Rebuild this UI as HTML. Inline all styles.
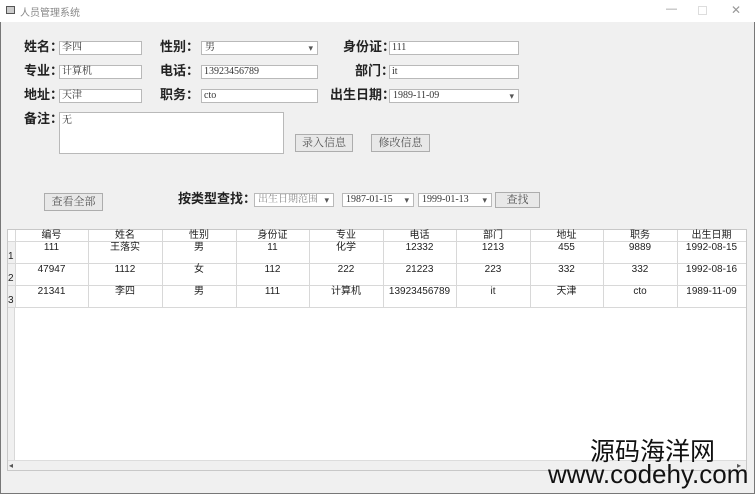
<!DOCTYPE html>
<html><head><meta charset="utf-8">
<style>
*{margin:0;padding:0;box-sizing:border-box}
body{width:755px;height:494px;overflow:hidden;background:#f0f0f0;position:relative;font-family:"Liberation Sans","Noto Sans CJK SC",sans-serif;color:#000}
.a{position:absolute}
.title{left:0;top:0;width:755px;height:22px;background:#fff;font-size:10px;color:#888}
.lbl{font-size:13px;font-weight:bold;line-height:14px;color:#222;white-space:nowrap}
.in{background:#fff;border:1px solid #b9b9b9;height:14px;font-size:10px;line-height:12px;padding-left:2px;color:#333;font-family:"Liberation Serif","Noto Serif CJK SC",serif}
.cb{background:#fff;border:1px solid #b9b9b9;height:14px;font-size:10px;line-height:12px;padding-left:3px;color:#333;font-family:"Liberation Serif","Noto Serif CJK SC",serif;white-space:nowrap;overflow:hidden}
.cb:after{content:"▾";position:absolute;right:4px;top:0;font-size:9px;color:#555}
.btn{background:#e8e8e8;border:1px solid #adadad;font-size:11px;color:#555;text-align:center;font-family:"Liberation Serif","Noto Serif CJK SC",serif}
.row{position:absolute;left:8px;height:22px;width:738px;border-bottom:1px solid #d8d8d8;font-size:10px;line-height:11px;color:#222}
.row span{position:absolute;top:0;text-align:center;height:100%;border-right:1px solid #d8d8d8}
</style></head><body>
<div class="a" style="left:0;top:0;width:755px;height:494px;border:1px solid #777;border-top:none"></div>
<div class="a title"><div class="a" style="left:6px;top:6px;width:9px;height:8px;border:1px solid #555;background:#ccc"></div><div class="a" style="left:20px;top:4px">人员管理系统</div>
<div class="a" style="left:666px;top:3px;font-size:11px;color:#999">—</div>
<div class="a" style="left:698px;top:6px;width:9px;height:9px;border:1px solid #ddd"></div>
<div class="a" style="left:731px;top:3px;font-size:12px;color:#999">✕</div></div>

<div class="a lbl" style="left:24px;top:40px">姓名：</div>
<div class="a in" style="left:59px;top:41px;width:83px">李四</div>
<div class="a lbl" style="left:160px;top:40px">性别：</div>
<div class="a cb" style="left:201px;top:41px;width:117px">男</div>
<div class="a lbl" style="left:343px;top:40px">身份证：</div>
<div class="a in" style="left:389px;top:41px;width:130px">111</div>

<div class="a lbl" style="left:24px;top:64px">专业：</div>
<div class="a in" style="left:59px;top:65px;width:83px">计算机</div>
<div class="a lbl" style="left:160px;top:64px">电话：</div>
<div class="a in" style="left:201px;top:65px;width:117px">13923456789</div>
<div class="a lbl" style="left:355px;top:64px">部门：</div>
<div class="a in" style="left:389px;top:65px;width:130px">it</div>

<div class="a lbl" style="left:24px;top:88px">地址：</div>
<div class="a in" style="left:59px;top:89px;width:83px">天津</div>
<div class="a lbl" style="left:160px;top:88px">职务：</div>
<div class="a in" style="left:201px;top:89px;width:117px">cto</div>
<div class="a lbl" style="left:330px;top:88px">出生日期：</div>
<div class="a cb" style="left:389px;top:89px;width:130px">1989-11-09</div>

<div class="a lbl" style="left:24px;top:112px">备注：</div>
<div class="a in" style="left:59px;top:112px;width:225px;height:42px;padding-top:2px">无</div>
<div class="a btn" style="left:295px;top:134px;width:58px;height:18px;line-height:16px">录入信息</div>
<div class="a btn" style="left:371px;top:134px;width:59px;height:18px;line-height:16px">修改信息</div>

<div class="a btn" style="left:44px;top:193px;width:59px;height:18px;line-height:16px">查看全部</div>
<div class="a lbl" style="left:178px;top:192px">按类型查找：</div>
<div class="a cb" style="left:254px;top:193px;width:80px;color:#888;padding-right:12px">出生日期范围</div>
<div class="a cb" style="left:342px;top:193px;width:72px">1987-01-15</div>
<div class="a cb" style="left:418px;top:193px;width:74px">1999-01-13</div>
<div class="a btn" style="left:495px;top:192px;width:45px;height:16px;line-height:14px">查找</div>

<div class="a" style="left:7px;top:229px;width:740px;height:242px;background:#fff;border:1px solid #c8c8c8"></div>
<div class="a" style="left:8px;top:242px;width:7px;height:218px;background:#f0f0f0;border-right:1px solid #d8d8d8"></div>
<div class="a" style="left:8px;top:460px;width:738px;height:10px;background:#f0f0f0;border-top:1px solid #ddd"><div class="a" style="left:1px;top:0;font-size:8px;color:#555">◂</div><div class="a" style="left:729px;top:0;font-size:8px;color:#555">▸</div></div>

<div class="row" style="top:230px;height:12px"><span style="left:0;width:8px"></span><span style="left:7px;width:74px">编号</span><span style="left:80px;width:75px">姓名</span><span style="left:154px;width:75px">性别</span><span style="left:228px;width:74px">身份证</span><span style="left:301px;width:75px">专业</span><span style="left:375px;width:74px">电话</span><span style="left:448px;width:75px">部门</span><span style="left:522px;width:74px">地址</span><span style="left:595px;width:75px">职务</span><span style="left:669px;width:69px;border-right:none">出生日期</span></div>
<div class="row" style="top:242px"><span style="left:0;width:8px;text-align:left;padding-top:9px;background:#f0f0f0">1</span><span style="left:7px;width:74px">111</span><span style="left:80px;width:75px">王落实</span><span style="left:154px;width:75px">男</span><span style="left:228px;width:74px">11</span><span style="left:301px;width:75px">化学</span><span style="left:375px;width:74px">12332</span><span style="left:448px;width:75px">1213</span><span style="left:522px;width:74px">455</span><span style="left:595px;width:75px">9889</span><span style="left:669px;width:69px;border-right:none">1992-08-15</span></div>
<div class="row" style="top:264px"><span style="left:0;width:8px;text-align:left;padding-top:9px;background:#f0f0f0">2</span><span style="left:7px;width:74px">47947</span><span style="left:80px;width:75px">1112</span><span style="left:154px;width:75px">女</span><span style="left:228px;width:74px">112</span><span style="left:301px;width:75px">222</span><span style="left:375px;width:74px">21223</span><span style="left:448px;width:75px">223</span><span style="left:522px;width:74px">332</span><span style="left:595px;width:75px">332</span><span style="left:669px;width:69px;border-right:none">1992-08-16</span></div>
<div class="row" style="top:286px"><span style="left:0;width:8px;text-align:left;padding-top:9px;background:#f0f0f0">3</span><span style="left:7px;width:74px">21341</span><span style="left:80px;width:75px">李四</span><span style="left:154px;width:75px">男</span><span style="left:228px;width:74px">111</span><span style="left:301px;width:75px">计算机</span><span style="left:375px;width:74px">13923456789</span><span style="left:448px;width:75px">it</span><span style="left:522px;width:74px">天津</span><span style="left:595px;width:75px">cto</span><span style="left:669px;width:69px;border-right:none">1989-11-09</span></div>

<div class="a" style="left:590px;top:437px;font-size:25px;line-height:30px;color:#111">源码海洋网</div>
<div class="a" style="left:548px;top:459px;font-size:26px;line-height:30px;color:#111;letter-spacing:0;white-space:nowrap">www.codehy.com</div>
</body></html>
